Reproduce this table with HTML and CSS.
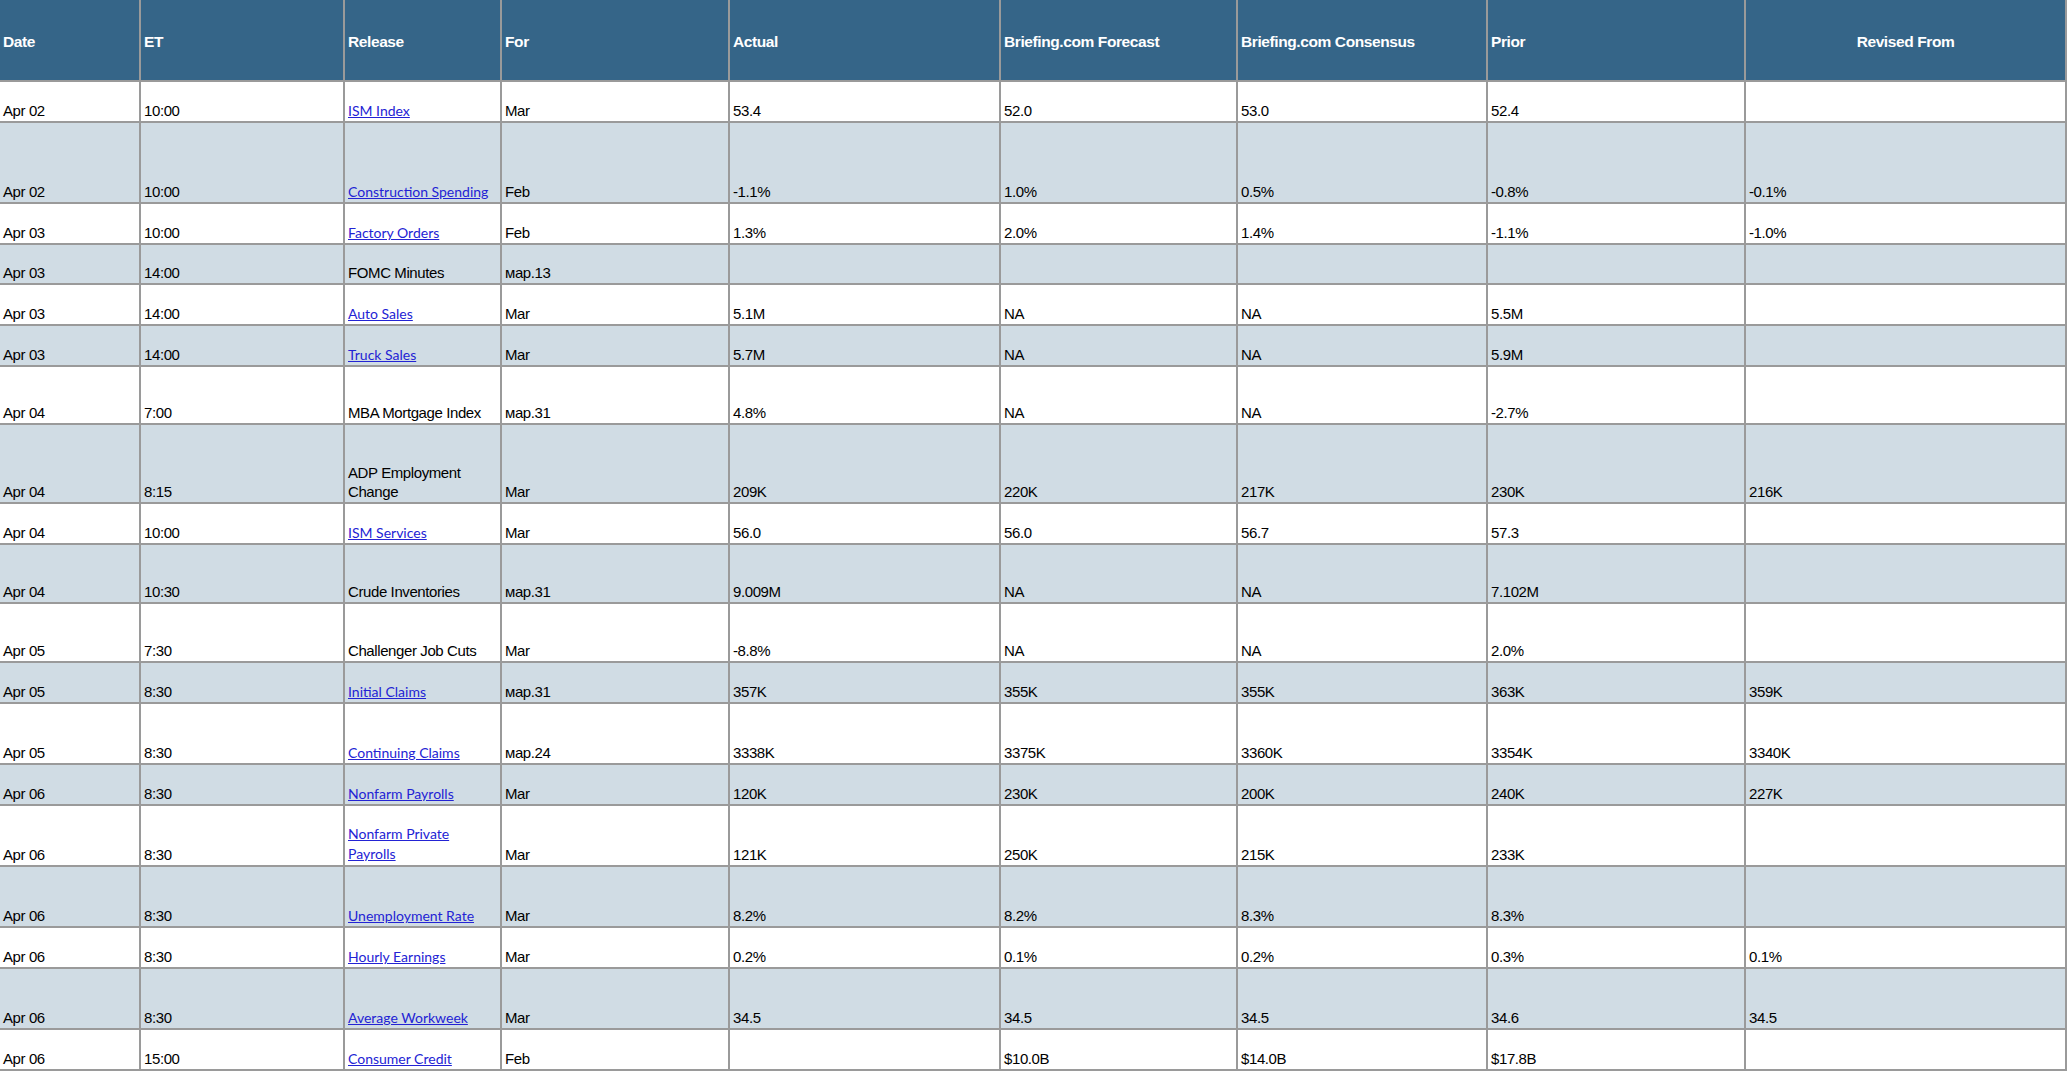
FILE: index.html
```html
<!DOCTYPE html>
<html lang="en">
<head>
<meta charset="utf-8">
<title>Economic Calendar</title>
<link rel="stylesheet" href="styles.css">
</head>
<body>
<div class="sheet" role="table">
  <div class="row head" role="row">
    <div class="cell" role="columnheader">Date</div>
    <div class="cell" role="columnheader">ET</div>
    <div class="cell" role="columnheader">Release</div>
    <div class="cell" role="columnheader">For</div>
    <div class="cell" role="columnheader">Actual</div>
    <div class="cell" role="columnheader">Briefing.com Forecast</div>
    <div class="cell" role="columnheader">Briefing.com Consensus</div>
    <div class="cell" role="columnheader">Prior</div>
    <div class="cell center" role="columnheader">Revised From</div>
  </div>

  <div class="row" role="row">
    <div class="cell">Apr 02</div><div class="cell">10:00</div>
    <div class="cell"><a href="#">ISM Index</a></div><div class="cell">Mar</div>
    <div class="cell">53.4</div><div class="cell">52.0</div><div class="cell">53.0</div><div class="cell">52.4</div><div class="cell"></div>
  </div>
  <div class="row alt" role="row">
    <div class="cell">Apr 02</div><div class="cell">10:00</div>
    <div class="cell"><a href="#">Construction Spending</a></div><div class="cell">Feb</div>
    <div class="cell">-1.1%</div><div class="cell">1.0%</div><div class="cell">0.5%</div><div class="cell">-0.8%</div><div class="cell">-0.1%</div>
  </div>
  <div class="row" role="row">
    <div class="cell">Apr 03</div><div class="cell">10:00</div>
    <div class="cell"><a href="#">Factory Orders</a></div><div class="cell">Feb</div>
    <div class="cell">1.3%</div><div class="cell">2.0%</div><div class="cell">1.4%</div><div class="cell">-1.1%</div><div class="cell">-1.0%</div>
  </div>
  <div class="row alt" role="row">
    <div class="cell">Apr 03</div><div class="cell">14:00</div>
    <div class="cell">FOMC Minutes</div><div class="cell">мар.13</div>
    <div class="cell"></div><div class="cell"></div><div class="cell"></div><div class="cell"></div><div class="cell"></div>
  </div>
  <div class="row" role="row">
    <div class="cell">Apr 03</div><div class="cell">14:00</div>
    <div class="cell"><a href="#">Auto Sales</a></div><div class="cell">Mar</div>
    <div class="cell">5.1M</div><div class="cell">NA</div><div class="cell">NA</div><div class="cell">5.5M</div><div class="cell"></div>
  </div>
  <div class="row alt" role="row">
    <div class="cell">Apr 03</div><div class="cell">14:00</div>
    <div class="cell"><a href="#">Truck Sales</a></div><div class="cell">Mar</div>
    <div class="cell">5.7M</div><div class="cell">NA</div><div class="cell">NA</div><div class="cell">5.9M</div><div class="cell"></div>
  </div>
  <div class="row" role="row">
    <div class="cell">Apr 04</div><div class="cell">7:00</div>
    <div class="cell">MBA Mortgage Index</div><div class="cell">мар.31</div>
    <div class="cell">4.8%</div><div class="cell">NA</div><div class="cell">NA</div><div class="cell">-2.7%</div><div class="cell"></div>
  </div>
  <div class="row alt" role="row">
    <div class="cell">Apr 04</div><div class="cell">8:15</div>
    <div class="cell"><span>ADP Employment<br>Change</span></div><div class="cell">Mar</div>
    <div class="cell">209K</div><div class="cell">220K</div><div class="cell">217K</div><div class="cell">230K</div><div class="cell">216K</div>
  </div>
  <div class="row" role="row">
    <div class="cell">Apr 04</div><div class="cell">10:00</div>
    <div class="cell"><a href="#">ISM Services</a></div><div class="cell">Mar</div>
    <div class="cell">56.0</div><div class="cell">56.0</div><div class="cell">56.7</div><div class="cell">57.3</div><div class="cell"></div>
  </div>
  <div class="row alt" role="row">
    <div class="cell">Apr 04</div><div class="cell">10:30</div>
    <div class="cell">Crude Inventories</div><div class="cell">мар.31</div>
    <div class="cell">9.009M</div><div class="cell">NA</div><div class="cell">NA</div><div class="cell">7.102M</div><div class="cell"></div>
  </div>
  <div class="row" role="row">
    <div class="cell">Apr 05</div><div class="cell">7:30</div>
    <div class="cell">Challenger Job Cuts</div><div class="cell">Mar</div>
    <div class="cell">-8.8%</div><div class="cell">NA</div><div class="cell">NA</div><div class="cell">2.0%</div><div class="cell"></div>
  </div>
  <div class="row alt" role="row">
    <div class="cell">Apr 05</div><div class="cell">8:30</div>
    <div class="cell"><a href="#">Initial Claims</a></div><div class="cell">мар.31</div>
    <div class="cell">357K</div><div class="cell">355K</div><div class="cell">355K</div><div class="cell">363K</div><div class="cell">359K</div>
  </div>
  <div class="row" role="row">
    <div class="cell">Apr 05</div><div class="cell">8:30</div>
    <div class="cell"><a href="#">Continuing Claims</a></div><div class="cell">мар.24</div>
    <div class="cell">3338K</div><div class="cell">3375K</div><div class="cell">3360K</div><div class="cell">3354K</div><div class="cell">3340K</div>
  </div>
  <div class="row alt" role="row">
    <div class="cell">Apr 06</div><div class="cell">8:30</div>
    <div class="cell"><a href="#">Nonfarm Payrolls</a></div><div class="cell">Mar</div>
    <div class="cell">120K</div><div class="cell">230K</div><div class="cell">200K</div><div class="cell">240K</div><div class="cell">227K</div>
  </div>
  <div class="row" role="row">
    <div class="cell">Apr 06</div><div class="cell">8:30</div>
    <div class="cell"><span class="links"><a href="#">Nonfarm Private </a><br><a href="#">Payrolls</a></span></div><div class="cell">Mar</div>
    <div class="cell">121K</div><div class="cell">250K</div><div class="cell">215K</div><div class="cell">233K</div><div class="cell"></div>
  </div>
  <div class="row alt" role="row">
    <div class="cell">Apr 06</div><div class="cell">8:30</div>
    <div class="cell"><a href="#">Unemployment Rate</a></div><div class="cell">Mar</div>
    <div class="cell">8.2%</div><div class="cell">8.2%</div><div class="cell">8.3%</div><div class="cell">8.3%</div><div class="cell"></div>
  </div>
  <div class="row" role="row">
    <div class="cell">Apr 06</div><div class="cell">8:30</div>
    <div class="cell"><a href="#">Hourly Earnings</a></div><div class="cell">Mar</div>
    <div class="cell">0.2%</div><div class="cell">0.1%</div><div class="cell">0.2%</div><div class="cell">0.3%</div><div class="cell">0.1%</div>
  </div>
  <div class="row alt" role="row">
    <div class="cell">Apr 06</div><div class="cell">8:30</div>
    <div class="cell"><a href="#">Average Workweek</a></div><div class="cell">Mar</div>
    <div class="cell">34.5</div><div class="cell">34.5</div><div class="cell">34.5</div><div class="cell">34.6</div><div class="cell">34.5</div>
  </div>
  <div class="row" role="row">
    <div class="cell">Apr 06</div><div class="cell">15:00</div>
    <div class="cell"><a href="#">Consumer Credit</a></div><div class="cell">Feb</div>
    <div class="cell"></div><div class="cell">$10.0B</div><div class="cell">$14.0B</div><div class="cell">$17.8B</div><div class="cell"></div>
  </div>
</div>
</body>
</html>
```

FILE: styles.css
```css
html, body {
  margin: 0;
  padding: 0;
  background: #ffffff;
}

.sheet {
  display: grid;
  width: max-content;
  grid-template-columns: 139px 202px 155px 226px 269px 235px 248px 256px 319px;
  grid-template-rows: 80px 39px 79px 39px 38px 39px 39px 56px 77px 39px 57px 57px 39px 59px 39px 59px 59px 39px 59px 39px;
  gap: 2px;
  padding: 0 2px 2px 0;
  background: #9a9a9a;
  font-family: "Liberation Sans", Arial, sans-serif;
  font-size: 15px;
  letter-spacing: -0.4px;
  line-height: 19px;
  color: #000000;
}

.row {
  display: contents;
}

.cell {
  display: flex;
  align-items: flex-end;
  padding: 0 3px 1px 3px;
  background: #ffffff;
  white-space: nowrap;
  overflow: hidden;
}

.row.alt .cell {
  background: #d0dce4;
}

.row.head .cell {
  align-items: center;
  background: #356588;
  color: #ffffff;
  font-weight: bold;
  font-size: 15.5px;
  letter-spacing: -0.4px;
  padding-top: 2px;
  padding-bottom: 0;
}

.row.head .cell.center {
  justify-content: center;
}

.cell a {
  font-family: Lato, "Open Sans", sans-serif;
  font-size: 14px;
  letter-spacing: 0;
  color: #2323d4;
  text-decoration: underline;
}

.cell .links {
  display: block;
  line-height: 20px;
}
```
